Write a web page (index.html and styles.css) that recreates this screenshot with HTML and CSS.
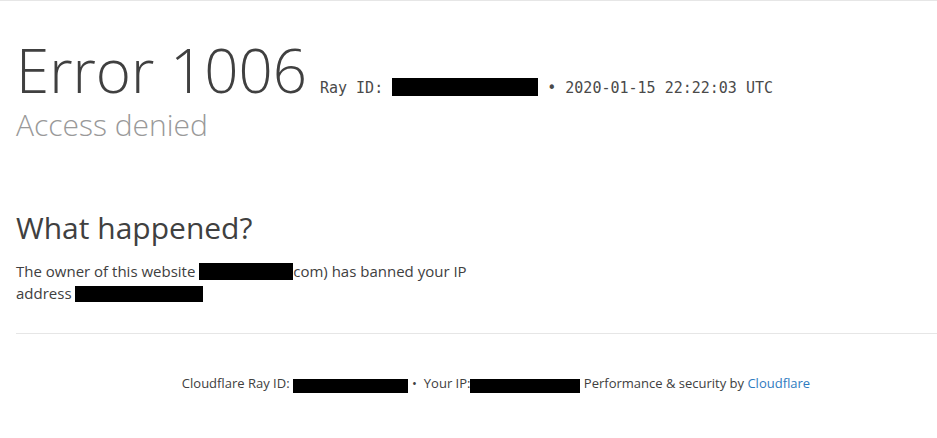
FILE: index.html
```html
<!DOCTYPE html>
<html lang="en">
<head>
<meta charset="utf-8">
<title>Access denied | Cloudflare</title>
<link rel="stylesheet" href="styles.css">
</head>
<body>
<div class="wrapper">
  <header class="header">
    <h1 class="title">
      <span class="error-type">Error 1006</span>
      <span class="ray">Ray ID: <span class="redact redact-ray"></span> • 2020-01-15 22:22:03 UTC</span>
    </h1>
    <h2 class="subtitle">Access denied</h2>
  </header>
  <section class="section">
    <div class="column">
      <h2 class="heading">What happened?</h2>
      <p class="text">The owner of this website <span class="redact redact-site"></span>com) has banned your IP address <span class="redact redact-ip"></span></p>
    </div>
  </section>
  <footer class="footer">
    <p class="footer-text">Cloudflare Ray ID: <span class="redact redact-fray"></span><span class="sep">•</span>Your IP:<span class="redact redact-fip"></span> Performance &amp; security by <a class="link" href="#">Cloudflare</a></p>
  </footer>
</div>
</body>
</html>
```

FILE: styles.css
```css
html {
  overflow: hidden;
}
html, body {
  margin: 0;
  padding: 0;
  background: #fff;
}
body {
  border-top: 1px solid #e6e6e6;
  font-family: "Open Sans", "Liberation Sans", sans-serif;
  color: #404040;
}
.wrapper {
  width: 960px;
  padding-left: 16px;
}
.header {
  padding-top: 39px;
}
.title {
  margin: 0;
  display: flex;
  align-items: baseline;
  font-weight: 300;
  line-height: 1;
}
.error-type {
  font-size: 60px;
  font-weight: 300;
  color: #404040;
  line-height: 60px;
}
.ray {
  margin-left: 13px;
  font-family: "DejaVu Sans Mono", "Liberation Mono", monospace;
  font-size: 15px;
  font-weight: 400;
  color: #4a4a4a;
  white-space: pre;
}
.redact {
  display: inline-block;
  background: #000;
}
.redact-ray {
  width: 146px;
  height: 18px;
  vertical-align: -3px;
}
.subtitle {
  margin: 7px 0 0;
  font-size: 30px;
  font-weight: 300;
  color: #999;
  line-height: 36px;
}
.section {
  padding-top: 65px;
}
.column {
  width: 472px;
}
.heading {
  margin: 0;
  font-size: 30px;
  font-weight: 400;
  line-height: 39px;
  color: #404040;
}
.text {
  margin: 13px 0 0;
  font-size: 15px;
  line-height: 22px;
  color: #404040;
}
.redact-site {
  width: 94px;
  height: 17px;
  vertical-align: -3px;
}
.redact-ip {
  width: 128px;
  height: 16px;
  vertical-align: -3px;
}
.footer {
  margin-top: 29px;
  border-top: 1px solid #e6e6e6;
  padding-top: 39px;
}
.footer-text {
  margin: 0;
  text-align: center;
  font-size: 13px;
  line-height: 20px;
  color: #404040;
}
.redact-fray {
  width: 115px;
  height: 14px;
  vertical-align: -5px;
}
.redact-fip {
  width: 110px;
  height: 14px;
  vertical-align: -5px;
}
.sep {
  margin: 0 7px 0 4px;
}
.link {
  color: #2f7bbf;
  text-decoration: none;
}
```
